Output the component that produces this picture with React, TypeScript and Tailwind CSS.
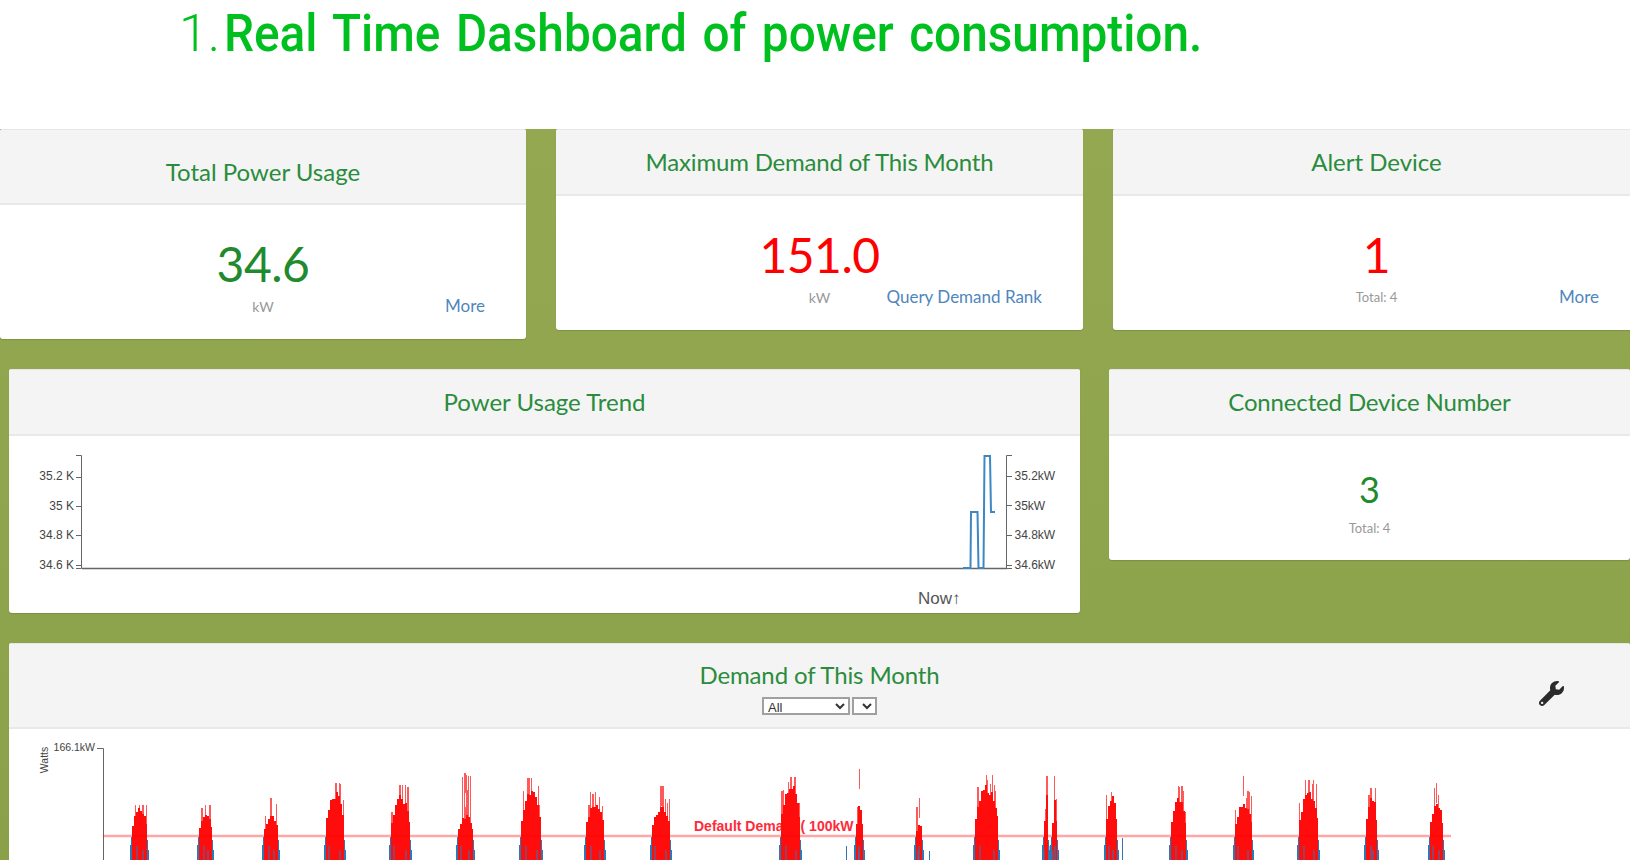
import { FaWrench } from "react-icons/fa";

const lato = { fontFamily: '"Lato", "Noto Sans", sans-serif' };

type Cluster = [number, number, number, number, number];
// x start, x end, peak of the thin spikes, seed, peak of the solid part
const clusters: Cluster[] = [
  [132, 146, 805, 3, 806], [199, 211, 805, 7, 812], [264, 277, 798, 11, 815], [326, 343, 783, 5, 790],
  [391, 409, 785, 13, 795], [458, 472, 773, 17, 815], [521, 540, 778, 19, 790], [586, 603, 792, 23, 800],
  [652, 669, 786, 29, 805], [781, 799, 777, 31, 780], [856, 862, 769, 37, 802], [916, 921, 798, 41, 822],
  [975, 997, 775, 43, 784], [1044, 1047, 776, 47, 792], [1052, 1056, 776, 49, 796], [1106, 1116, 792, 53, 793],
  [1171, 1185, 786, 59, 796], [1235, 1251, 776, 61, 800], [1299, 1317, 780, 67, 790], [1366, 1376, 788, 71, 792],
  [1430, 1442, 783, 73, 800],
];

function rnd(seed: number) {
  const v = Math.sin(seed * 12.9898) * 43758.5453;
  return v - Math.floor(v);
}

const solid: string[] = [];
const light: string[] = [];
const blue: string[] = [];
clusters.forEach(([x0, x1, top, seed, solidTop]) => {
  const mid = (x0 + x1) / 2;
  const half = Math.max((x1 - x0) / 2, 1);
  for (let x = x0; x <= x1; x++) {
    const stepX = x - ((x - x0) % 2);
    const t = Math.abs(stepX - mid) / half;
    const dome = 1 - t * t * 0.6;
    const r = rnd(seed * 100 + stepX);
    const y = 836 - (836 - solidTop) * dome * (0.8 + 0.2 * r);
    solid.push(`M${x + 0.5} ${Math.round(y)}V860`);
    if (rnd(seed * 50 + x) > 0.72) {
      light.push(`M${x + 0.5} ${Math.max(top, Math.round(y - 10 - 16 * r))}V${Math.round(y)}`);
    }
  }
  light.push(`M${Math.round(mid) + 0.5} ${top}V${top + 20}`);
  blue.push(`M${x0 - 0.5} 837V860`, `M${x1 + 1.5} 840V860`, `M${x0 - 1.5} 845V860`, `M${x1 + 2.5} 850V860`);
});
light.push("M462.5 777V820M464.5 773V820M466.5 775V820M468.5 776V820M470.5 776V820");
const blueOver = clusters.map(([x0, x1, , s]) => `M${x0 + 2 + (s % 4)} 846V860M${x1 - 3} 850V860`).join("");
const extras = "M846.5 846V860M929.5 851V860M1122.5 838V860";

function Card({ children, header, hClass, bodyClass, className }: { children: React.ReactNode; header: React.ReactNode; hClass: string; bodyClass: string; className: string }) {
  return (
    <div className={`shrink-0 bg-white rounded-[3px] overflow-hidden shadow-[0_1px_1px_rgba(0,0,0,0.12)] ${className}`}>
      <div className={`bg-[#f4f4f4] border-t border-[#e6e6e6] border-b-2 border-b-[#e9e9e9] flex flex-col items-center justify-center text-[24px] leading-none text-[#2a8c3c] ${hClass}`} style={lato}>
        {header}
      </div>
      <div className={bodyClass}>{children}</div>
    </div>
  );
}

function StatBody({ value, color, label, labelClass, link }: { value: string; color: string; label: string; labelClass: string; link: string }) {
  return (
    <div className="flex flex-col items-center pt-[24px]" style={lato}>
      <div className={`text-[48px] leading-[70px] tracking-[-0.5px] ${color}`}>{value}</div>
      <div className="w-full grid grid-cols-[1fr_auto_1fr] items-center h-[25px] mt-[-6px]">
        <span />
        <span className={`text-[#999999] mt-[2px] ${labelClass}`}>{label}</span>
        <a className="justify-self-end text-[17px] text-[#4f86bd] mr-[41px]">{link}</a>
      </div>
    </div>
  );
}

export default function App() {
  return (
    <div className="w-[1630px] h-[860px] overflow-hidden bg-linear-to-b from-[#95a952] to-[#8aa14a]">
      <div className="h-[129px] bg-white pl-[179px] pt-[3px]">
        <h1 className="text-[52px] leading-[62px] text-[#00c020] whitespace-nowrap [word-spacing:4px]" style={{ fontFamily: '"Roboto", sans-serif' }}>
          <span className="font-light">1.</span>
          <span className="inline-block ml-[4px] font-medium origin-left scale-x-[0.918]">Real Time Dashboard of power consumption.</span>
        </h1>
      </div>

      <div className="h-[240px] flex items-start gap-[30px]">
        <Card header={<div className="pt-[11px]">Total Power Usage</div>} hClass="h-[76px]" bodyClass="h-[134px]" className="w-[526px]">
          <StatBody value="34.6" color="text-[#1f8a2e]" label="kW" labelClass="text-[14px]" link="More" />
        </Card>
        <Card header={<div className="tracking-[-0.19px]">Maximum Demand of This Month</div>} hClass="h-[67px]" bodyClass="h-[134px]" className="w-[527px]">
          <StatBody value="151.0" color="text-[#ff0000]" label="kW" labelClass="text-[14px]" link="Query Demand Rank" />
        </Card>
        <Card header="Alert Device" hClass="h-[67px]" bodyClass="h-[134px]" className="w-[527px]">
          <StatBody value="1" color="text-[#ff0000]" label="Total: 4" labelClass="text-[13px]" link="More" />
        </Card>
      </div>

      <div className="h-[274px] flex items-start gap-[29px] pl-[9px]">
        <Card header="Power Usage Trend" hClass="h-[67px]" bodyClass="h-[177px]" className="w-[1071px]">
          <svg viewBox="9 436 1071 177" width="1071" height="177" className="block">
            <g fontFamily='"Liberation Sans", sans-serif' fontSize="12" fill="#444444">
              <text x="74" y="480" textAnchor="end">35.2 K</text>
              <text x="74" y="510" textAnchor="end">35 K</text>
              <text x="74" y="539" textAnchor="end">34.8 K</text>
              <text x="74" y="569" textAnchor="end">34.6 K</text>
              <text x="1014.5" y="480">35.2kW</text>
              <text x="1014.5" y="510">35kW</text>
              <text x="1014.5" y="539">34.8kW</text>
              <text x="1014.5" y="569">34.6kW</text>
              <text x="918" y="604" fontSize="17" fill="#555555">Now↑</text>
            </g>
            <g stroke="#666666" fill="none" strokeWidth="1">
              <path d="M76 455.5H81.5V568.5H76M76 477.5H81.5M76 506.5H81.5M76 535.5H81.5M76 565.5H81.5" />
              <path d="M1012 455.5H1006.5V568.5H1012M1006.5 476.5H1012M1006.5 505.5H1012M1006.5 535.5H1012M1006.5 565.5H1012" />
              <path d="M82 568.5H1007" strokeWidth="1.5" />
            </g>
            <path d="M963 568H970.5L971 512H977.5L978.5 568H983.5L984.5 456H990L991 512H995" fill="none" stroke="#3d87c2" strokeWidth="2" />
          </svg>
        </Card>
        <Card header={<div className="tracking-[-0.15px]">Connected Device Number</div>} hClass="h-[67px]" bodyClass="h-[124px] flex flex-col items-center pt-[26px]" className="w-[521px]">
          <div className="text-[36px] leading-[54px] text-[#1f8a2e]" style={lato}>3</div>
          <div className="text-[13px] leading-[20px] text-[#999999] mt-[2px]" style={lato}>Total: 4</div>
        </Card>
      </div>

      <div className="pl-[9px]">
        <Card
          header={
            <div className="w-full relative flex flex-col items-center pt-[4px]">
              <div className="leading-[28px] tracking-[-0.12px]">Demand of This Month</div>
              <div className="flex gap-[2px] mt-[8px]">
                <select className="w-[88px] h-[18px] border-2 border-[#a0a0a0] bg-white text-[13px] leading-none text-[#333333] appearance-auto" style={{ fontFamily: '"Liberation Sans", sans-serif' }} defaultValue="All">
                  <option>All</option>
                </select>
                <select className="w-[25px] h-[18px] border-2 border-[#a0a0a0] bg-white text-[13px] text-[#333333] appearance-auto" aria-label="Period">
                  <option></option>
                </select>
              </div>
              <FaWrench className="absolute left-[1530px] top-[24px] text-[#2b2b2b]" size={25} />
            </div>
          }
          hClass="h-[86px]"
          bodyClass="h-[140px]"
          className="w-[1621px]"
        >
          <svg viewBox="9 729 1621 131" width="1621" height="131" className="block">
            <text transform="translate(48 760) rotate(-90)" textAnchor="middle" fontFamily='"Liberation Sans", sans-serif' fontSize="10.5" fill="#444444">Watts</text>
            <text x="95" y="751" textAnchor="end" fontFamily='"Liberation Sans", sans-serif' fontSize="10.5" fill="#444444">166.1kW</text>
            <path d="M97 748.5H103.5V860" fill="none" stroke="#666666" strokeWidth="1" />
            <path d={blue.join("") + extras} stroke="#2f78b4" strokeWidth="1" fill="none" />
            <path d={light.join("")} stroke="#ff5a5a" strokeWidth="1" fill="none" />
            <text x="694" y="831" fontFamily='"Liberation Sans", sans-serif' fontSize="14" fontWeight="700" fill="#ff2a3a">Default Demand( 100kW )</text>
            <path d={solid.join("")} stroke="#ff0d0d" strokeWidth="1" fill="none" />
            <path d="M103 836H1451" stroke="#ff0000" strokeOpacity="0.35" strokeWidth="2.5" fill="none" />
            <path d={blueOver} stroke="#2f78b4" strokeWidth="1" fill="none" />
          </svg>
        </Card>
      </div>
    </div>
  );
}
